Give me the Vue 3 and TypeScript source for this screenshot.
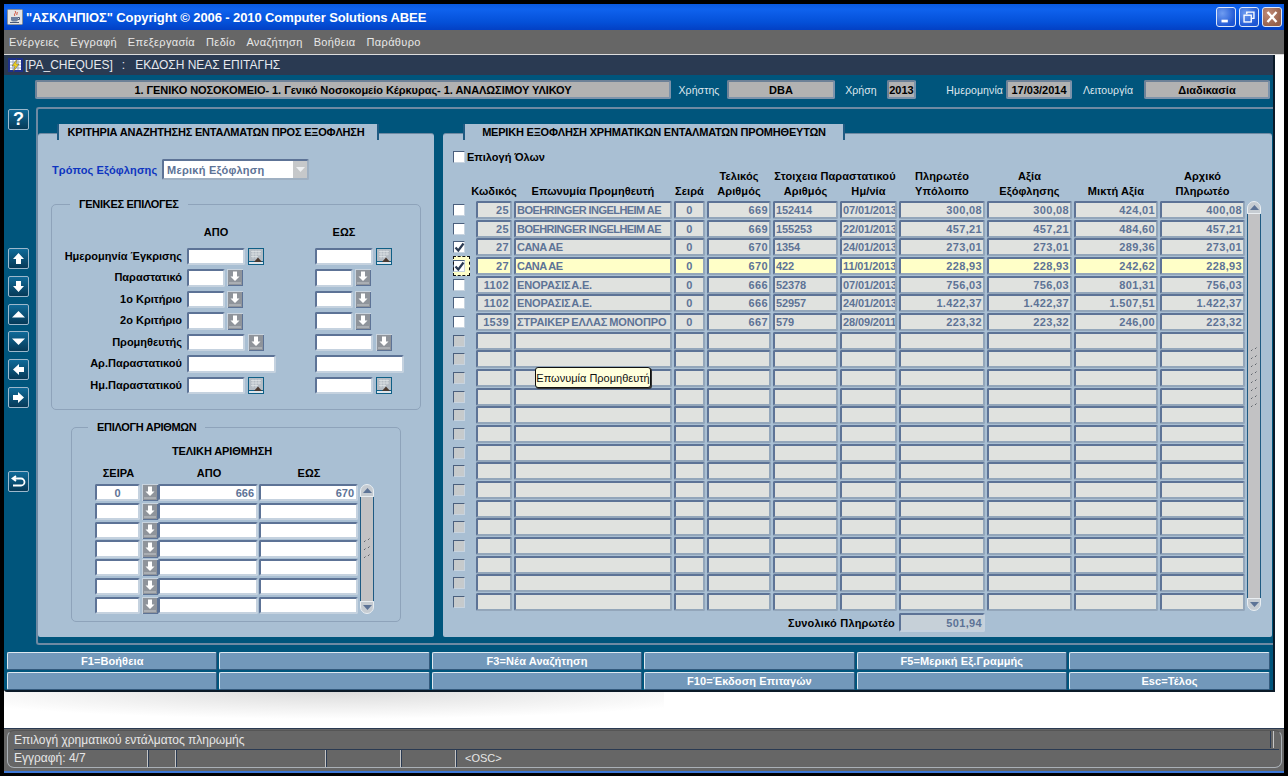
<script setup lang="ts">
const menus = ['Ενέργειες', 'Εγγραφή', 'Επεξεργασία', 'Πεδίο', 'Αναζήτηση', 'Βοήθεια', 'Παράθυρο']

const navTop = ['#i-up', '#i-down', '#i-tri-up', '#i-tri-down', '#i-left', '#i-right']

const filters = [
  { label: 'Ημερομηνία Έγκρισης', size: 'mid', btn: 'cal' },
  { label: 'Παραστατικό', size: 'short', btn: 'lov' },
  { label: '1ο Κριτήριο', size: 'short', btn: 'lov' },
  { label: '2ο Κριτήριο', size: 'short', btn: 'lov' },
  { label: 'Προμηθευτής', size: 'mid', btn: 'lov' },
  { label: 'Αρ.Παραστατικού', size: 'long', btn: '' },
  { label: 'Ημ.Παραστατικού', size: 'mid', btn: 'cal' },
]

const numbering = [
  ['0', '666', '670'],
  ['', '', ''],
  ['', '', ''],
  ['', '', ''],
  ['', '', ''],
  ['', '', ''],
  ['', '', ''],
]

const headOne = ['', '', '', '', 'Τελικός', 'Στοιχεια Παραστατικού', 'Πληρωτέο', 'Αξία', '', 'Αρχικό']
const headTwo = ['', 'Κωδικός', 'Επωνυμία Προμηθευτή', 'Σειρά', 'Αριθμός', 'Αριθμός', 'Ημ/νία', 'Υπόλοιπο', 'Εξόφλησης', 'Μικτή Αξία', 'Πληρωτέο']

interface Row { cells: string[]; checked?: boolean; active?: boolean }

const filled: Row[] = [
  { cells: ['25', 'BOEHRINGER INGELHEIM AE', '0', '669', '152414', '07/01/2013', '300,08', '300,08', '424,01', '400,08'] },
  { cells: ['25', 'BOEHRINGER INGELHEIM AE', '0', '669', '155253', '22/01/2013', '457,21', '457,21', '484,60', '457,21'] },
  { cells: ['27', 'CANA AE', '0', '670', '1354', '24/01/2013', '273,01', '273,01', '289,36', '273,01'], checked: true },
  { cells: ['27', 'CANA AE', '0', '670', '422', '11/01/2013', '228,93', '228,93', '242,62', '228,93'], checked: true, active: true },
  { cells: ['1102', 'ΕΝΟΡΑΣΙΣ Α.Ε.', '0', '666', '52378', '07/01/2013', '756,03', '756,03', '801,31', '756,03'] },
  { cells: ['1102', 'ΕΝΟΡΑΣΙΣ Α.Ε.', '0', '666', '52957', '24/01/2013', '1.422,37', '1.422,37', '1.507,51', '1.422,37'] },
  { cells: ['1539', 'ΣΤΡΑΙΚΕΡ  ΕΛΛΑΣ  ΜΟΝΟΠΡΟ', '0', '667', '579', '28/09/2011', '223,32', '223,32', '246,00', '223,32'] },
]
const rows: Row[] = [...filled, ...Array.from({ length: 15 }, () => ({ cells: Array(10).fill('') }))]

// column alignment: Κωδικός, name, Σειρά, Τελικός, Αριθμός, date, then amounts
const align = ['r', 'l', 'c', 'r', 'l', 'l', 'r', 'r', 'r', 'r']

const isLatin = (s: string) => /^[A-Z ]+$/.test(s)

const keys = [
  'F1=Βοήθεια', '', 'F3=Νέα Αναζήτηση', '', 'F5=Μερική Εξ.Γραμμής', '',
  '', '', '', 'F10=Έκδοση Επιταγών', '', 'Esc=Τέλος',
]
</script>

<template>
  <div class="app">
    <svg class="defs">
      <symbol id="i-up" viewBox="0 0 13 13"><path d="M6.500 1 12 7H9v5H4V7H1z" fill="#fff" /></symbol>
      <symbol id="i-down" viewBox="0 0 13 13"><path d="M4 1h5v5h3l-5.500 6L1 6h3z" fill="#fff" /></symbol>
      <symbol id="i-tri-up" viewBox="0 0 13 13"><path d="M6.500 3 13 9.500H0z" fill="#fff" /></symbol>
      <symbol id="i-tri-down" viewBox="0 0 13 13"><path d="M0 3.500h13L6.500 10z" fill="#fff" /></symbol>
      <symbol id="i-left" viewBox="0 0 13 13"><path d="M1 6.500 7 1v3h5v5H7v3z" fill="#fff" /></symbol>
      <symbol id="i-right" viewBox="0 0 13 13"><path d="M12 6.500 6 12V9H1V4h5V1z" fill="#fff" /></symbol>
      <symbol id="i-back" viewBox="0 0 15 15"><path d="M5 2 1.500 4.500 5 7M2 4.500h8a3.500 3.500 0 0 1 0 7H2" fill="none" stroke="#fff" stroke-width="1.800" /></symbol>
      <symbol id="i-lov" viewBox="0 0 16 17">
        <path d="M6 2.500h4v5h2.500L8 12 3.500 7.500H6z" fill="#fff" />
        <path d="M2.500 14h11" stroke="#fff" stroke-dasharray="1 1" fill="none" />
      </symbol>
      <symbol id="i-cal" viewBox="0 0 16 17">
        <rect width="16" height="17" fill="#0f5f86" />
        <rect x="1" y="1" width="14" height="12" fill="#b4bcc4" />
        <path d="M3 3.500h10M3 6h10M3 8.500h7M5 2.500v8M8 2.500v8M11 2.500v5" stroke="#e2e6ea" stroke-width=".7" fill="none" />
        <path d="M6 14 10 9.500 14 14z" fill="#4b3a30" />
        <rect x="1" y="14" width="14" height="2" fill="#dfe6ec" />
      </symbol>
      <symbol id="i-grip" viewBox="0 0 8 8">
        <path d="M1 5 2.500 3.500M5 3 6.500 1.500" stroke="#555a62" stroke-width=".9" fill="none" />
      </symbol>
    </svg>

    <header class="titlebar">
      <svg class="java" viewBox="0 0 16 16" width="16" height="16">
        <rect x=".5" y=".5" width="15" height="15" rx="1" fill="#e4e4e4" stroke="#8a8f98" />
        <path d="M8 2c2 2-2 3 0 5M10 3c1 1-1 2 0 3" stroke="#d0452c" fill="none" />
        <path d="M4 8h7v2.500a2 2 0 0 1-2 2H6a2 2 0 0 1-2-2z" fill="#6b7f9e" />
        <path d="M11 8.500h1.500v2H11M3 13.500h9" stroke="#4a5a78" fill="none" />
      </svg>
      <span class="apptitle">"ΑΣΚΛΗΠΙΟΣ" Copyright © 2006 - 2010 Computer Solutions ABEE</span>
      <div class="winbtns">
        <div class="winbtn"><svg viewBox="0 0 20 20"><rect x="5" y="13" width="7" height="3" fill="#fff" /></svg></div>
        <div class="winbtn"><svg viewBox="0 0 20 20"><path d="M7.500 7V4.500h8v7H13" fill="none" stroke="#fff" stroke-width="1.500" /><rect x="4.500" y="8" width="8" height="7.500" fill="none" stroke="#fff" stroke-width="1.500" /></svg></div>
        <div class="winbtn close"><svg viewBox="0 0 20 20"><path d="M5 4.500 15 15.500M15 4.500 5 15.500" stroke="#fff" stroke-width="2.600" /></svg></div>
      </div>
    </header>

    <nav class="menubar">
      <span v-for="m in menus" :key="m">{{ m }}</span>
    </nav>

    <div class="desk">
      <section class="form">
        <div class="form-title">
          <svg viewBox="0 0 16 16" width="16" height="16">
            <rect x="0" y="1" width="15" height="14" fill="#1c2f8a" />
            <rect x="2" y="3" width="11" height="10" fill="#fff" />
            <path d="M2 5h11M2 8h11M2 11h11M5 3v10M10 3v10" stroke="#7a8ab0" stroke-width=".7" />
            <path d="M9 2 4 9h3l-2 6 6-8H8z" fill="#f2d21e" stroke="#333" stroke-width=".4" />
          </svg>
          <span class="form-code">[PA_CHEQUES]</span>
          <span class="form-sep">:</span>
          <span>ΕΚΔΟΣΗ ΝΕΑΣ ΕΠΙΤΑΓΗΣ</span>
        </div>

        <div class="head">
          <div class="hfield">1. ΓΕΝΙΚΟ ΝΟΣΟΚΟΜΕΙΟ- 1. Γενικό Νοσοκομείο Κέρκυρας- 1. ΑΝΑΛΩΣΙΜΟΥ ΥΛΙΚΟΥ</div>
          <span class="hlabel">Χρήστης</span>
          <div class="hfield">DBA</div>
          <span class="hlabel">Χρήση</span>
          <div class="hfield">2013</div>
          <span class="hlabel date-label">Ημερομηνία</span>
          <div class="hfield">17/03/2014</div>
          <span class="hlabel">Λειτουργία</span>
          <div class="hfield">Διαδικασία</div>
        </div>

        <div class="work">
          <aside class="tools">
            <div class="tool help">?</div>
            <div class="navset">
              <div v-for="n in navTop" :key="n" class="tool"><svg width="13" height="13"><use :href="n" /></svg></div>
            </div>
            <div class="tool back"><svg width="15" height="15"><use href="#i-back" /></svg></div>
          </aside>

          <div class="stage">
            <section class="panel left">
              <div class="tab tab-left">ΚΡΙΤΗΡΙΑ ΑΝΑΖΗΤΗΣΗΣ ΕΝΤΑΛΜΑΤΩΝ ΠΡΟΣ ΕΞΟΦΛΗΣΗ</div>

              <div class="mode">
                <span class="mode-label">Τρόπος Εξόφλησης</span>
                <div class="select">
                  <span>Μερική Εξόφληση</span>
                  <div class="select-btn"><svg width="9" height="5" viewBox="0 0 9 5"><path d="M0 0h9L4.500 5z" fill="#eef0f2" /></svg></div>
                </div>
              </div>

              <div class="group general">
                <div class="legend">ΓΕΝΙΚΕΣ ΕΠΙΛΟΓΕΣ</div>
                <div class="filters">
                  <span></span>
                  <span class="colhead">ΑΠΟ</span>
                  <span class="colhead">ΕΩΣ</span>
                  <template v-for="f in filters" :key="f.label">
                    <span class="flabel">{{ f.label }}</span>
                    <div v-for="side in ['from', 'to']" :key="side" class="fcell">
                      <div class="input" :class="f.size"></div>
                      <svg v-if="f.btn === 'cal'" class="calbtn" width="16" height="17"><use href="#i-cal" /></svg>
                      <div v-else-if="f.btn === 'lov'" class="lovbtn"><svg width="16" height="17"><use href="#i-lov" /></svg></div>
                    </div>
                  </template>
                </div>
              </div>

              <div class="group numbers">
                <div class="legend">ΕΠΙΛΟΓΗ ΑΡΙΘΜΩΝ</div>
                <div class="num-title">ΤΕΛΙΚΗ ΑΡΙΘΜΗΣΗ</div>
                <div class="num-head">
                  <span>ΣΕΙΡΑ</span><span></span><span>ΑΠΟ</span><span>ΕΩΣ</span>
                </div>
                <div class="num-body">
                  <div class="num-rows">
                    <div v-for="(n, i) in numbering" :key="i" class="num-row">
                      <div class="input val c">{{ n[0] }}</div>
                      <div class="lovbtn"><svg width="16" height="17"><use href="#i-lov" /></svg></div>
                      <div class="input val r">{{ n[1] }}</div>
                      <div class="input val r">{{ n[2] }}</div>
                    </div>
                  </div>
                  <div class="scroll">
                    <div class="cap top"><svg width="9" height="5" viewBox="0 0 9 5"><path d="M0 5h9L4.500 0z" fill="#5d7396" /></svg></div>
                    <div class="track"><svg class="grip" width="8" height="24"><use v-for="y in [0, 8, 16]" :key="y" href="#i-grip" :y="y" width="8" height="8" /></svg></div>
                    <div class="cap bottom"><svg width="9" height="5" viewBox="0 0 9 5"><path d="M0 0h9L4.500 5z" fill="#5d7396" /></svg></div>
                  </div>
                </div>
              </div>
            </section>

            <section class="panel right">
              <div class="tab tab-right">ΜΕΡΙΚΗ ΕΞΟΦΛΗΣΗ ΧΡΗΜΑΤΙΚΩΝ ΕΝΤΑΛΜΑΤΩΝ ΠΡΟΜΗΘΕΥΤΩΝ</div>
              <label class="all"><span class="check"></span>Επιλογή Όλων</label>

              <div class="thead cols">
                <span v-for="(h, i) in headOne" :key="'a' + i" :class="{ wide: i === 5 }">{{ h }}</span>
                <span v-for="(h, i) in headTwo" :key="'b' + i">{{ h }}</span>
              </div>

              <div class="tbl">
                <div class="rows">
                  <div v-for="(row, i) in rows" :key="i" class="row cols" :class="{ active: row.active }">
                    <div class="cb" :class="{ focus: row.active }">
                      <span class="check" :class="{ off: !row.cells[0] }">
                        <svg v-if="row.checked" width="11" height="11" viewBox="0 0 11 11"><path d="M1.500 5.500 4.300 8.500 9.500 1.500" fill="none" stroke="#2a3a52" stroke-width="2.200" /></svg>
                      </span>
                    </div>
                    <div v-for="(c, j) in row.cells" :key="j" class="cell" :class="[align[j], { latin: j === 1 && isLatin(c) }]">{{ c }}</div>
                  </div>
                  <div class="tip">Επωνυμία Προμηθευτή</div>
                </div>
                <div class="scroll">
                  <div class="cap top"><svg width="9" height="5" viewBox="0 0 9 5"><path d="M0 5h9L4.500 0z" fill="#5d7396" /></svg></div>
                  <div class="track"><svg class="grip long-grip" width="8" height="64"><use v-for="y in [0, 8, 16, 24, 32, 40, 48, 56]" :key="y" href="#i-grip" :y="y" width="8" height="8" /></svg></div>
                  <div class="cap bottom"><svg width="9" height="5" viewBox="0 0 9 5"><path d="M0 0h9L4.500 5z" fill="#5d7396" /></svg></div>
                </div>
              </div>

              <div class="total">
                <span>Συνολικό Πληρωτέο</span>
                <div class="cell r total-val">501,94</div>
              </div>
            </section>
          </div>
        </div>

        <div class="keys">
          <div v-for="(k, i) in keys" :key="i" class="key">{{ k }}</div>
        </div>
      </section>
      <div class="ghost"></div>
    </div>

    <footer class="status">
      <div class="status-in">
        <div class="status-msg">
          <span>Επιλογή χρηματικού εντάλματος πληρωμής</span>
          <i class="msg-end"></i>
        </div>
        <div class="status-info">
          <span class="s1">Εγγραφή: 4/7</span>
          <span class="s2"></span>
          <span class="s3"></span>
          <span class="s4"></span>
          <span class="s5"></span>
          <span class="s6">&lt;OSC&gt;</span>
        </div>
      </div>
    </footer>
  </div>
</template>

<style>
html, body { margin: 0; background: #000; }
</style>

<style scoped>
.app {
  width: 1288px;
  height: 776px;
  box-sizing: border-box;
  padding: 4px 4px 0;
  background: #000;
  display: flex;
  flex-direction: column;
  overflow: hidden;
  font-family: "Liberation Sans", Arial, sans-serif;
  font-size: 11px;
}
.defs { display: none; }

.titlebar {
  height: 26px;
  flex: none;
  display: flex;
  align-items: center;
  padding-left: 3px;
  background: linear-gradient(#0a5ae0 0, #0f62ee 20%, #0450d8 70%, #0340c4 100%);
  color: #fff;
}
.java { flex: none; }
.apptitle {
  margin-left: 3px;
  font-size: 13px;
  font-weight: bold;
  letter-spacing: -.1px;
  white-space: nowrap;
}
.winbtns {
  margin-left: auto;
  margin-right: 2px;
  display: flex;
  gap: 3px;
}
.winbtn {
  width: 20px;
  height: 20px;
  border: 1px solid #dfe8f8;
  border-radius: 3px;
  background: radial-gradient(circle at 30% 30%, #6f9cf0, #1d56d4 75%);
  box-sizing: border-box;
}
.winbtn svg { display: block; width: 100%; height: 100%; }
.winbtn.close { background: radial-gradient(circle at 30% 30%, #c08a78, #94604a 75%); }

.menubar {
  height: 24px;
  flex: none;
  display: flex;
  align-items: center;
  gap: 11px;
  padding-left: 5px;
  background: #666;
  color: #e8e8e8;
  font-size: 11px;
  letter-spacing: .35px;
  border-bottom: 1px solid #ddd;
  box-sizing: content-box;
}

.desk {
  flex: 1;
  min-height: 0;
  background: #fff;
}
.form {
  width: 1271px;
  height: 637px;
  box-sizing: border-box;
  background: #00557c;
  border-right: 2px solid #0b1a28;
  border-bottom: 2px solid #0b1a28;
  border-bottom-left-radius: 3px;
  display: flex;
  flex-direction: column;
}
.form-title {
  height: 20px;
  flex: none;
  display: flex;
  align-items: center;
  padding-left: 4px;
  background: #2a3a52;
  color: #e6e9ee;
  font-size: 12px;
}
.form-code { margin-left: 1px; }
.form-sep { margin: 0 10px 0 9px; }

.head {
  margin: 5px 0 0 31px;
  height: 19px;
  flex: none;
  display: grid;
  grid-template-columns: 636px 56px 108px 52px 29px 90px 66px 72px 126px;
  align-items: stretch;
}
.hfield {
  box-sizing: border-box;
  background: #b2b2b2;
  border: 2px solid;
  border-color: #6d8197 #7c93ab #7c93ab #6d8197;
  border-radius: 2px;
  color: #000;
  font-weight: bold;
  display: flex;
  align-items: center;
  justify-content: center;
  white-space: nowrap;
}
.head .hfield:first-child { letter-spacing: -.05px; }
.hlabel {
  color: #dfe7ee;
  font-size: 10.500px;
  letter-spacing: .1px;
  display: flex;
  align-items: center;
  justify-content: center;
  white-space: nowrap;
}
.date-label {
  justify-content: flex-end;
  padding-right: 3px;
}

.work {
  flex: 1;
  min-height: 0;
  display: flex;
  margin-top: 8px;
}
.tools {
  width: 32px;
  flex: none;
  box-sizing: border-box;
  padding: 2px 0 0 4px;
  display: flex;
  flex-direction: column;
}
.tool {
  width: 21px;
  height: 21px;
  box-sizing: border-box;
  border: 1px solid #9cb8cc;
  border-radius: 2px;
  background: linear-gradient(#0f6a98, #063a58);
  display: flex;
  align-items: center;
  justify-content: center;
  color: #fff;
  flex: none;
}
.help {
  font-size: 18px;
  font-weight: bold;
}
.navset {
  margin-top: 118px;
  display: flex;
  flex-direction: column;
  gap: 6.800px;
}
.back { margin-top: 63px; }

.stage {
  flex: 1;
  height: 538px;
  box-sizing: border-box;
  border: 2px solid #6f8aa3;
  border-right: 0;
  border-radius: 3px 0 0 3px;
  padding-top: 24px;
  display: flex;
  gap: 9px;
}
.panel {
  height: 504px;
  background: #a9bfd3;
  border-top: 1px solid #6f8aa3;
  border-radius: 3px 3px 2px 2px;
  box-sizing: border-box;
}
.left { width: 396px; }
.right { width: 829px; }
.tab {
  height: 16px;
  margin-top: -10px;
  box-sizing: border-box;
  background: #a9bfd3;
  border-left: 2px solid #1f5a82;
  border-right: 2px solid #1f5a82;
  color: #000;
  font-weight: bold;
  font-size: 11px;
  letter-spacing: -.2px;
  display: flex;
  align-items: center;
  justify-content: center;
  white-space: nowrap;
}
.tab-left { width: 322px; margin-left: 19px; padding-right: 4px; }
.tab-right { width: 382px; margin-left: 20px; }

.mode {
  margin: 19px 0 0 14px;
  display: flex;
  align-items: center;
  gap: 4px;
}
.mode-label {
  color: #0e35c0;
  font-weight: bold;
  font-size: 11px;
  letter-spacing: .15px;
  width: 106px;
  white-space: nowrap;
}
.select {
  width: 147px;
  height: 21px;
  box-sizing: border-box;
  background: #fff;
  border: 2px solid;
  border-color: #5d7396 #9fb0c2 #9fb0c2 #5d7396;
  border-radius: 2px;
  display: flex;
  align-items: center;
  justify-content: space-between;
  padding-left: 3px;
  color: #5d7396;
  font-weight: bold;
  letter-spacing: .25px;
}
.select-btn {
  width: 14px;
  height: 100%;
  background: #c6c8ca;
  display: flex;
  align-items: center;
  justify-content: center;
}

.group {
  box-sizing: border-box;
  border: 1px solid #8ea3ba;
  border-radius: 5px;
}
.legend {
  width: fit-content;
  height: 13px;
  margin: -7px 0 0 18px;
  padding: 0 9px;
  line-height: 13px;
  background: #a9bfd3;
  color: #000;
  font-weight: bold;
  font-size: 11px;
  letter-spacing: -.3px;
  white-space: nowrap;
}
.general {
  width: 370px;
  height: 206px;
  margin: 24px 0 0 13px;
}
.filters {
  margin-top: 15px;
  display: grid;
  grid-template-columns: 130px 123px 1fr;
  column-gap: 5px;
  grid-auto-rows: 17.400px;
  row-gap: 4.200px;
}
.colhead {
  width: 58px;
  text-align: center;
  font-weight: bold;
  color: #000;
  line-height: 13px;
}
.flabel {
  text-align: right;
  font-weight: bold;
  color: #000;
  line-height: 17px;
  white-space: nowrap;
}
.fcell {
  display: flex;
  align-items: center;
}
.input {
  box-sizing: border-box;
  height: 100%;
  background: #fff;
  border: 2px solid;
  border-color: #5d7396 #c5d2df #c5d2df #5d7396;
  border-radius: 2px;
  color: #5d7396;
  font-weight: bold;
  font-size: 11px;
  flex: none;
}
.mid { width: 58px; }
.short { width: 38px; }
.long { width: 89px; }
.calbtn { margin-left: 3px; flex: none; }
.lovbtn {
  width: 16px;
  height: 17px;
  box-sizing: border-box;
  margin-left: 2px;
  background: #8f949b;
  box-shadow: inset 1px 1px 0 #c9d4df, inset -1px -1px 0 #5d7396;
  flex: none;
  display: flex;
}
.lovbtn svg { display: block; }
.mid + .lovbtn { margin-left: 3px; }

.numbers {
  width: 330px;
  height: 195px;
  margin: 17px 0 0 33px;
}
.numbers .legend { margin-left: 16px; }
.num-title {
  margin-top: 11px;
  text-align: center;
  font-weight: bold;
  color: #000;
  line-height: 13px;
  margin-left: -28px;
  letter-spacing: -.1px;
}
.num-head {
  margin: 9px 0 0 23px;
  display: grid;
  grid-template-columns: 47px 17px 100px 100px;
  text-align: center;
  font-weight: bold;
  color: #000;
  line-height: 13px;
}
.num-body {
  margin: 4px 0 0 23px;
  display: flex;
  gap: 2px;
  height: 130px;
}
.num-rows {
  width: 263px;
  display: grid;
  grid-template-rows: repeat(7, 1fr);
  row-gap: 1.500px;
}
.num-row {
  display: grid;
  grid-template-columns: 45px 16px 100px 99px;
  column-gap: 1px;
}
.num-row .lovbtn { margin-left: 1px; height: 100%; }
.val {
  display: flex;
  align-items: center;
  padding: 0 2px;
}
.val.c { justify-content: center; }
.val.r { justify-content: flex-end; }

.scroll {
  width: 14px;
  display: flex;
  flex-direction: column;
  flex: none;
}
.cap {
  height: 13px;
  flex: none;
  box-sizing: border-box;
  background: #c6ccd2;
  border: 1px solid #e9eef2;
  display: flex;
  align-items: center;
  justify-content: center;
}
.cap.top { border-radius: 7px 7px 0 0; }
.cap.bottom { border-radius: 0 0 7px 7px; }
.track {
  flex: 1;
  background: #c2c2c4;
  border-left: 1px solid #1f5a82;
  border-right: 1px solid #1f5a82;
  display: flex;
  align-items: center;
  justify-content: center;
}
.grip { display: block; }
.long-grip { margin-bottom: 56px; }

.all {
  margin: 11px 0 0 10px;
  height: 12px;
  display: flex;
  align-items: center;
  gap: 2px;
  color: #000;
  font-weight: bold;
  font-size: 11px;
}
.check {
  width: 12px;
  height: 12px;
  box-sizing: border-box;
  flex: none;
  background: #fff;
  border: 1px solid;
  border-color: #4a5f7d #c8d4e0 #c8d4e0 #4a5f7d;
  display: block;
}
.check svg { display: block; overflow: visible; }
.check.off { background: #c6cacc; }

.cols {
  display: grid;
  grid-template-columns: 21px 36px 158px 31px 64px 65px 57px 86px 85px 84px 85px;
  column-gap: 2px;
}
.thead {
  margin: 6px 0 0 10px;
  width: 792px;
  grid-template-rows: 15px 15px;
  height: 31px;
  color: #000;
  font-weight: bold;
  font-size: 11px;
  line-height: 15px;
  letter-spacing: .1px;
  white-space: nowrap;
}
.thead span {
  display: flex;
  justify-content: center;
}
.thead .wide { grid-column: span 2; }
.tbl {
  margin: 1px 0 0 10px;
  display: flex;
  gap: 2px;
  height: 410px;
}
.rows {
  width: 792px;
  position: relative;
  display: grid;
  grid-template-rows: repeat(22, 1fr);
  row-gap: .670px;
}
.row { min-height: 0; }
.cb {
  display: flex;
  align-items: center;
}
.cb.focus {
  margin: -1px 4px -1px 0;
  background: #ffffc8;
  outline: 1px dashed #111;
  outline-offset: -1px;
}
.cell {
  box-sizing: border-box;
  background: #e0e2df;
  border: 2px solid;
  border-color: #5d7396 #93a6ba #93a6ba #5d7396;
  border-radius: 2px;
  color: #5d7396;
  font-weight: bold;
  font-size: 11px;
  letter-spacing: .35px;
  display: flex;
  align-items: center;
  padding: 0 1px;
  white-space: pre;
  overflow: hidden;
}
.cell.l { letter-spacing: -.12px; word-spacing: -2px; }
.cell.latin { letter-spacing: -.55px; word-spacing: 0; }
.cell.r { justify-content: flex-end; }
.cell.c { justify-content: center; }
.active .cell { background: #ffffc8; }
.tip {
  position: absolute;
  left: 82px;
  top: 166px;
  width: 116px;
  height: 21px;
  box-sizing: border-box;
  background: #ffffdc;
  border: 1px solid #111;
  border-radius: 3px;
  box-shadow: 1px 1px 0 #333;
  color: #111;
  font-size: 11px;
  display: flex;
  align-items: center;
  justify-content: center;
  white-space: nowrap;
}
.total {
  margin: 2px 0 0 10px;
  width: 532px;
  height: 19px;
  display: flex;
  justify-content: flex-end;
  align-items: center;
  gap: 4px;
  color: #000;
  font-weight: bold;
  font-size: 11px;
  letter-spacing: .2px;
}
.total-val {
  width: 86px;
  height: 19px;
  flex: none;
  background: #c6d0d8;
  border-color: #5d7396 #c5d2df #c5d2df #5d7396;
}

.keys {
  margin: 4px 0 0 3px;
  width: 1263px;
  display: grid;
  grid-template-columns: repeat(5, 1fr) 201px;
  grid-auto-rows: 18px;
  gap: 2px;
}
.key {
  background: #7298ba;
  border: 1px solid;
  border-color: #dfe9f0 #33597c #33597c #dfe9f0;
  border-radius: 2px;
  box-sizing: border-box;
  color: #fff;
  font-weight: bold;
  font-size: 11px;
  letter-spacing: .1px;
  display: flex;
  align-items: center;
  justify-content: center;
  white-space: nowrap;
}
.ghost {
  width: 660px;
  height: 30px;
  background: radial-gradient(ellipse 62% 90% at 50% 0, #dcdcdc, #fff);
}

.status {
  height: 45px;
  margin-bottom: 3px;
  flex: none;
  box-sizing: border-box;
  background: #666;
  padding: 1px 2px 0 3px;
  border-top: 1px solid #2a3a52;
  border-bottom: 2px solid #3d78d8;
  color: #e6e6e6;
  font-size: 12px;
}
.status-in {
  height: 38px;
  border: 1px solid #aab0b6;
  border-top-color: #555;
  border-radius: 7px;
  box-sizing: border-box;
  padding-left: 6px;
}
.status-msg {
  height: 19px;
  box-sizing: border-box;
  border-bottom: 1px solid #2a3a52;
  padding-bottom: 1px;
  display: flex;
  align-items: center;
  justify-content: space-between;
  margin-right: 2px;
}
.msg-end {
  width: 2px;
  height: 17px;
  margin-right: 5px;
  border-left: 1px solid #2a3a52;
  border-right: 1px solid #c6c6c6;
}
.status-info {
  height: 17px;
  display: flex;
  align-items: center;
}
.status-info span {
  box-sizing: border-box;
  height: 100%;
  line-height: 16px;
  border-right: 1px solid #c6c6c6;
  box-shadow: 1px 0 0 #2a3a52;
}
.s1 { width: 134px; }
.s2 { width: 28px; }
.s3 { width: 150px; }
.s4 { width: 75px; }
.s5 { width: 55px; }
.status-info .s6 {
  border: 0;
  box-shadow: none;
  padding-left: 9px;
  font-size: 11px;
}
</style>
